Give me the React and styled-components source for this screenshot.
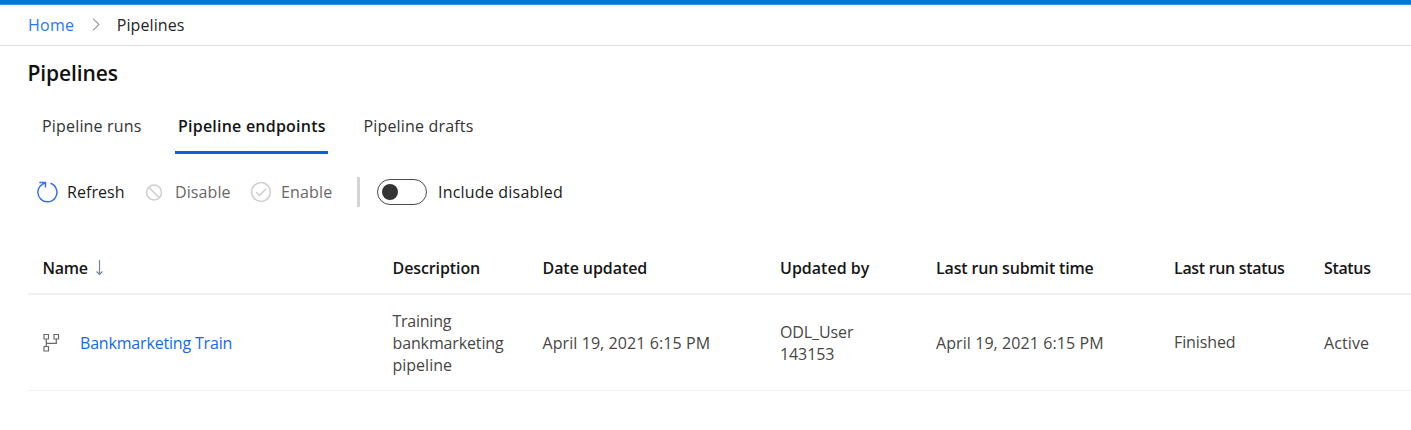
import React from "react";
import styled, { createGlobalStyle } from "styled-components";

const GlobalStyle = createGlobalStyle`
  * { box-sizing: border-box; }
  body {
    margin: 0;
    background: #fff;
    color: #1b1a19;
    font: 400 16px/22px "Open Sans", "Noto Sans", sans-serif;
    overflow: hidden;
  }
`;

const Page = styled.div`
  height: 430px;
  overflow: hidden;
`;

const Accent = styled.div`
  height: 5px;
  background: #0078d7;
  border-bottom: 1px solid #3c96df;
`;

const Label = styled.span`
  white-space: nowrap;
  letter-spacing: ${(p) => p.$track || 0}px;
`;

const Breadcrumb = styled.nav`
  display: flex;
  align-items: center;
  height: 41px;
  padding: 0 0 1px 28px;
  border-bottom: 1px solid #dedede;
`;

const Crumb = styled(Label)`
  color: ${(p) => (p.$link ? "#2a78ee" : "#252423")};
`;

const Chevron = styled.svg`
  width: 8px;
  height: 13px;
  margin: 0 17px 0 17.5px;
`;

const Title = styled.h1`
  margin: 0;
  padding: 13px 0 0 27.5px;
  font-size: 21px;
  line-height: 28px;
  font-weight: 600;
  color: #111;
`;

const Tabs = styled.div`
  display: flex;
  height: 47px;
  margin-top: 20px;
  padding-left: 24px;
`;

const Tab = styled.div`
  width: ${(p) => p.$width}px;
  height: 47px;
  margin-right: ${(p) => p.$gap || 0}px;
  padding: 8px 0 0 ${(p) => p.$pad}px;
  font-weight: ${(p) => (p.$active ? 600 : 400)};
  color: ${(p) => (p.$active ? "#151515" : "#333")};
  border-bottom: 3px solid ${(p) => (p.$active ? "#0b61dc" : "transparent")};
`;

const Toolbar = styled.div`
  display: flex;
  align-items: center;
  height: 32px;
  margin-top: 22px;
  padding-left: 36px;
`;

const Action = styled.div`
  display: flex;
  align-items: center;
  width: ${(p) => p.$width}px;
  color: ${(p) => (p.$disabled ? "#686868" : "#1b1a19")};
`;

const ActionIcon = styled.svg`
  flex: none;
  width: 22px;
  height: 22px;
  margin-right: ${(p) => p.$gap}px;
  fill: none;
  stroke: ${(p) => (p.$disabled ? "#cfcdcd" : "#3b71e8")};
  stroke-width: 1.5;
`;

const Divider = styled.div`
  width: 3px;
  height: 30px;
  margin-right: 17px;
  background: #d1d5d8;
`;

const Switch = styled.div`
  display: flex;
  align-items: center;
  width: 50px;
  height: 26px;
  margin-right: 11px;
  padding-left: 4px;
  border: 1px solid #4a4a4a;
  border-radius: 13px;
`;

const Knob = styled.div`
  width: 16px;
  height: 16px;
  border-radius: 50%;
  background: #333;
`;

const Table = styled.div`
  margin: 35px 0 0 28px;
`;

const Row = styled.div`
  display: grid;
  grid-template-columns: 350px 150px 237.5px 156px 238px 150px 1fr;
  align-items: center;
  height: ${(p) => (p.$head ? 52 : 96)}px;
  padding-left: 14.5px;
  font-weight: ${(p) => (p.$head ? 600 : 400)};
  color: ${(p) => (p.$head ? "#161616" : "#484644")};
  border-bottom: ${(p) => (p.$head ? "2px solid #f1f1f1" : "1px solid #f3f2f1")};
`;

const Cell = styled.div`
  display: flex;
  flex-direction: ${(p) => (p.$stack ? "column" : "row")};
  align-items: ${(p) => (p.$stack ? "flex-start" : "center")};
  padding-top: ${(p) => (p.$stack ? 1 : 0)}px;
  padding-bottom: ${(p) => p.$lift || 0}px;
`;

const SortArrow = styled.svg`
  width: 9px;
  height: 16px;
  margin-left: 7.5px;
`;

const PipelineIcon = styled.svg`
  width: 17px;
  height: 19px;
  margin-right: 20.5px;
`;

const RowLink = styled(Label)`
  color: #1769e0;
`;

export default function App() {
  return (
    <Page>
      <GlobalStyle />
      <Accent />
      <Breadcrumb>
        <Crumb $link $track={0.25}>Home</Crumb>
        <Chevron viewBox="0 0 8 13" fill="none" stroke="#999" strokeWidth="1.1">
          <path d="M1 .7 7 6.5 1 12.3" />
        </Chevron>
        <Crumb $track={0.1}>Pipelines</Crumb>
      </Breadcrumb>
      <Title><Label $track={-0.1}>Pipelines</Label></Title>
      <Tabs>
        <Tab $width={135} $gap={16} $pad={18}><Label $track={0.18}>Pipeline runs</Label></Tab>
        <Tab $active $width={153} $gap={18} $pad={3}><Label $track={0.22}>Pipeline endpoints</Label></Tab>
        <Tab $width={146} $pad={17.5}><Label $track={0.17}>Pipeline drafts</Label></Tab>
      </Tabs>
      <Toolbar>
        <Action $width={107}>
          <ActionIcon $gap={9} viewBox="0 0 22 22">
            <path d="M14.4 2.3A9.5 9.5 0 1 1 6.3 3.3L9.3 1.8M3.3 1.6h6.2v5" />
          </ActionIcon>
          <Label $track={0.07}>Refresh</Label>
        </Action>
        <Action $disabled $width={107}>
          <ActionIcon $disabled $gap={10} viewBox="0 0 22 22">
            <circle cx="11" cy="11.5" r="7.5" />
            <path d="m5.7 6.2 10.6 10.6" />
          </ActionIcon>
          <Label $track={0.1}>Disable</Label>
        </Action>
        <Action $disabled $width={107}>
          <ActionIcon $disabled $gap={9} viewBox="0 0 22 22">
            <circle cx="11" cy="11" r="9.4" />
            <path d="m6.3 11.3 3.2 3.2 6.7-6.7" />
          </ActionIcon>
          <Label $track={0.15}>Enable</Label>
        </Action>
        <Divider />
        <Switch><Knob /></Switch>
        <Label $track={0.2}>Include disabled</Label>
      </Toolbar>
      <Table>
        <Row $head>
          <Cell>
            <Label $track={-0.3}>Name</Label>
            <SortArrow viewBox="0 0 9 16" fill="none" stroke="#778590" strokeWidth="1.2">
              <path d="M4.5 0v14.3M1.5 11.5 4.5 14.5 7.5 11.5" />
            </SortArrow>
          </Cell>
          <Cell><Label $track={-0.1}>Description</Label></Cell>
          <Cell><Label $track={-0.07}>Date updated</Label></Cell>
          <Cell><Label>Updated by</Label></Cell>
          <Cell><Label $track={-0.17}>Last run submit time</Label></Cell>
          <Cell><Label $track={-0.32}>Last run status</Label></Cell>
          <Cell><Label $track={-0.35}>Status</Label></Cell>
        </Row>
        <Row>
          <Cell>
            <PipelineIcon viewBox="0 0 17 19" fill="none" stroke="#6b6967" strokeWidth="1.2">
              <path d="M1 1.5h4.5V6H1zM11 1.5h4.5V6H11zM1 13.5h4.5V18H1zM3.3 6v7.5M3.3 10.3h10V6" />
            </PipelineIcon>
            <RowLink $track={-0.18}>Bankmarketing Train</RowLink>
          </Cell>
          <Cell $stack>
            <Label $track={-0.25}>Training</Label>
            <Label $track={-0.13}>bankmarketing</Label>
            <Label>pipeline</Label>
          </Cell>
          <Cell><Label $track={0.08}>April 19, 2021 6:15 PM</Label></Cell>
          <Cell $stack>
            <Label $track={-0.1}>ODL_User</Label>
            <Label $track={-0.1}>143153</Label>
          </Cell>
          <Cell><Label $track={0.08}>April 19, 2021 6:15 PM</Label></Cell>
          <Cell $lift={2}><Label $track={-0.1}>Finished</Label></Cell>
          <Cell><Label $track={0.1}>Active</Label></Cell>
        </Row>
      </Table>
    </Page>
  );
}
